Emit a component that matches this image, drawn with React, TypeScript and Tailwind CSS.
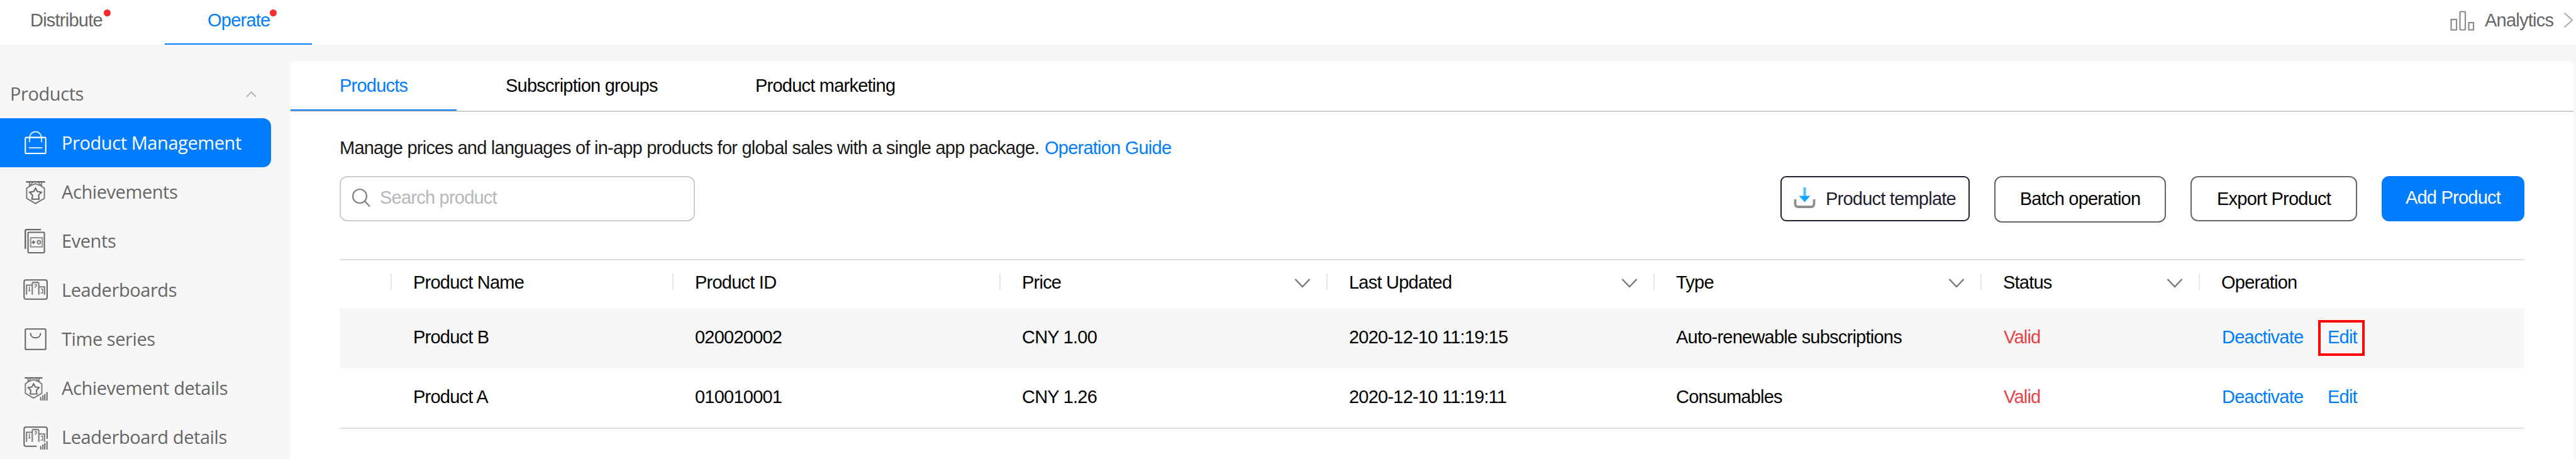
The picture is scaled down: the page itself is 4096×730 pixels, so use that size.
import type { ReactNode } from "react";

const sans = "font-['Liberation_Sans',Arial,sans-serif] text-[29px] leading-[30px] tracking-[-0.77px] whitespace-nowrap";
const side = "font-['Open_Sans','Noto_Sans',sans-serif] text-[29px] leading-[40px] tracking-[-0.42px] whitespace-nowrap";

function Icon({ children }: { children: ReactNode }) {
  return (
    <svg className="h-[39px] w-[39px] shrink-0" viewBox="0 0 18 18" fill="none" stroke="currentColor" strokeWidth="0.95">
      {children}
    </svg>
  );
}

const Bag = () => (
  <Icon>
    <rect x="1.5" y="4.9" width="15" height="11.7" rx="0.7" />
    <path d="M4.6 8.4V5.6C4.6 2.6 6.5.7 9 .7s4.4 1.9 4.4 4.9v2.8" opacity="0.8" />
    <path d="M4 12.5h10" opacity="0.8" />
  </Icon>
);

const medal = (
  <>
    <path d="M2 1.5h14" strokeWidth="1.1" />
    <path d="M4.6 1.8v2.8M13.4 1.8v2.8M5 4.2l2-2.4M13 4.2l-2-2.4" opacity="0.75" />
    <path d="M9 2.9L5.2 4.3 2.5 6.2v7.4L9 17.4l6.500-3.800V6.200l-2.700-1.900z" opacity="0.85" />
    <path d="M9 6.100l1.300 2.500 3 .5-2.100 2.200.4 2.900H6.400l.4-2.900-2.100-2.200 3-.5z" />
  </>
);

const podium = (
  <g opacity="0.85">
    <path d="M2.400 12.300V5.300h4M6.600 12.300V4.200q0-.9.9-.9h3q.9 0 .9.900v8.100M11.600 6.600h4v5.700" />
    <path d="M4.500 6.300v3.200M3.800 9.500h1.500M8.300 5.200q1.500-1 1.500.3l-1.300 1.700M12.900 8.200h1.300v2.900h-1.500" strokeWidth="0.7" />
  </g>
);

const miniBars = <path d="M12.800 15.300V18M14.400 14.200V18M15.800 13.300V18M17.400 11.800V18" strokeWidth="0.900" />;

const Medal = () => <Icon>{medal}</Icon>;

const Events = () => (
  <Icon>
    <path d="M1.500 14.700V1.500q0-1 1-1H13" strokeWidth="1.100" />
    <rect x="3.500" y="2.500" width="12" height="15" rx="0.600" />
    <rect x="5.400" y="6.500" width="8.600" height="6.700" opacity="0.700" />
    <path d="M6.200 9.800h2.600M7.500 8.500v2.600" />
    <circle cx="11.500" cy="9.800" r="1.200" opacity="0.800" />
  </Icon>
);

const Board = () => (
  <Icon>
    <rect x="0.600" y="1.500" width="16.900" height="14.100" rx="1.300" />
    {podium}
  </Icon>
);

const Time = () => (
  <Icon>
    <rect x="1.500" y="1.500" width="15" height="15" rx="0.700" />
    <path d="M5.300 4.500C5.300 6.700 6.900 8 9 8s3.700-1.300 3.700-3.500" />
  </Icon>
);

const MedalDetails = () => (
  <Icon>
    <g transform="translate(-0.800 0) scale(0.930 0.930)">{medal}</g>
    {miniBars}
  </Icon>
);

const BoardDetails = () => (
  <Icon>
    <path d="M9.800 15.600H2q-1.400 0-1.400-1.300V2.800q0-1.300 1.400-1.300h14q1.500 0 1.500 1.300v7.400" />
    {podium}
    {miniBars}
  </Icon>
);

const menu = [
  { label: "Product Management", icon: <Bag />, active: true },
  { label: "Achievements", icon: <Medal /> },
  { label: "Events", icon: <Events /> },
  { label: "Leaderboards", icon: <Board /> },
  { label: "Time series", icon: <Time /> },
  { label: "Achievement details", icon: <MedalDetails /> },
  { label: "Leaderboard details", icon: <BoardDetails /> },
];

const grid = "grid grid-cols-[81px_448px_520px_520px_520px_520px_347px_518px]";

const columns = [
  { label: "Product Name" },
  { label: "Product ID" },
  { label: "Price", sort: true },
  { label: "Last Updated", sort: true },
  { label: "Type", sort: true },
  { label: "Status", sort: true },
  { label: "Operation" },
];

const rows = [
  { cells: ["Product B", "020020002", "CNY 1.00", "2020-12-10 11:19:15", "Auto-renewable subscriptions"], marked: true },
  { cells: ["Product A", "010010001", "CNY 1.26", "2020-12-10 11:19:11", "Consumables"], marked: false },
];

function TopBar() {
  return (
    <header className={`flex h-[71px] bg-white text-[#666] ${sans}`}>
      <div className="flex w-[262px] pt-[17px] pl-[48px]">
        <span className="w-[117px]">Distribute</span>
        <i className="-mt-[2px] h-[11px] w-[11px] rounded-full bg-[#fa2a2d]" />
      </div>
      <div className="flex w-[234px] border-b-2 border-[#007dff] pt-[17px] pl-[68px] text-[#007dff]">
        <span className="w-[99px]">Operate</span>
        <i className="-mt-[2px] h-[11px] w-[11px] rounded-full bg-[#fa2a2d]" />
      </div>
      <div className="ml-auto flex pt-[17px] pr-[4px]">
        <svg className="mr-[15px] h-[33px] w-[41px]" viewBox="0 0 41 33" fill="none" stroke="#8c8c8c" strokeWidth="2.200">
          <rect x="2.500" y="14" width="8.500" height="16.500" />
          <rect x="16.500" y="1.500" width="8.500" height="29" rx="1" />
          <rect x="30.500" y="19" width="7.500" height="11.500" />
        </svg>
        <span className="w-[123px]">Analytics</span>
        <svg className="mt-[2px] ml-[2px] h-[26px] w-[16px]" viewBox="0 0 16 26" fill="none" stroke="#adadad" strokeWidth="2.200">
          <path d="M1.500 1.500L14 13 1.500 24.500" />
        </svg>
      </div>
    </header>
  );
}

function Sidebar() {
  return (
    <aside className={`w-[462px] shrink-0 pt-[58px] text-[#666] ${side}`}>
      <div className="flex h-[59px] items-start justify-between pr-[54px] pl-[16px]">
        <span>Products</span>
        <svg className="mt-[16px] h-[10px] w-[17px]" viewBox="0 0 17 10" fill="none" stroke="#b5b5b5" strokeWidth="2">
          <path d="M1 9l7.500-7.500L16 9" />
        </svg>
      </div>
      {menu.map((m) => (
        <div
          key={m.label}
          className={`flex h-[78px] w-[431px] items-center pl-[37px] ${m.active ? "rounded-r-[13px] bg-[#007dff] text-white" : ""}`}
        >
          {m.icon}
          <span className="ml-[22px]">{m.label}</span>
        </div>
      ))}
    </aside>
  );
}

function Toolbar() {
  return (
    <div className="flex h-[132px] items-start">
      <div className="flex h-[72px] w-[565px] rounded-[12px] border-2 border-[#ccc] pt-[17px] pl-[17px]">
        <svg className="h-[31px] w-[31px]" viewBox="0 0 31 31" fill="none" stroke="#808080" strokeWidth="2.200">
          <circle cx="13" cy="13" r="11" />
          <path d="M20.500 20.500L29 29.500" />
        </svg>
        <span className="ml-[14px] text-[#b5b7bb]">Search product</span>
      </div>
      <div className="ml-auto flex items-start">
        <div className="flex h-[72px] w-[301px] rounded-[9px] border-2 border-[#1f2130] pt-[19px] pl-[19px] text-[#1f2130]">
          <svg className="-mt-[3px] mr-[15px] h-[36px] w-[36px]" viewBox="0 0 36 36" fill="none">
            <path d="M2.500 19v7q0 5 5 5h20q5 0 5-5v-7" stroke="#8f8f8f" strokeWidth="3.800" />
            <path d="M17.500 0v17" stroke="#5cc3ff" strokeWidth="4.400" />
            <path d="M8.500 13.500h18l-9 10z" fill="#14a5ff" />
          </svg>
          Product template
        </div>
        <div className="ml-[39px] flex h-[74px] w-[273px] justify-center rounded-[12px] border-2 border-[#666] pt-[19px] text-black">Batch operation</div>
        <div className="ml-[39px] flex h-[72px] w-[265px] justify-center rounded-[12px] border-2 border-[#666] pt-[19px] text-black">Export Product</div>
        <div className="ml-[39px] flex h-[72px] w-[227px] justify-center rounded-[12px] bg-[#007dff] pt-[19px] text-white">Add Product</div>
      </div>
    </div>
  );
}

function Table() {
  return (
    <div className="border-y-2 border-[#dfdfdf] text-black">
      <div className={`${grid} h-[76px] pt-[20px]`}>
        <span />
        {columns.map((c) => (
          <div key={c.label} className="flex items-start">
            <i className="mt-px mr-[34px] h-[26px] w-[2px] bg-[#e6e8ee]" />
            {c.label}
            {c.sort && (
              <svg className="mt-[8px] mr-[25px] ml-auto h-[17px] w-[26px]" viewBox="0 0 26 17" fill="none" stroke="#777" strokeWidth="2.400">
                <path d="M1.500 2L13 14 24.500 2" />
              </svg>
            )}
          </div>
        ))}
      </div>
      {rows.map((r) => (
        <div key={r.cells[0]} className={`${grid} h-[95px] pt-[31px] ${r.marked ? "bg-[#f7f7f7]" : ""}`}>
          <span />
          {r.cells.map((c) => (
            <span key={c} className="pl-[36px]">{c}</span>
          ))}
          <span className="pl-[37px] text-[#e84045]">Valid</span>
          <div className="flex pl-[37px] text-[#007dff]">
            <span className="w-[168px]">Deactivate</span>
            <span className="relative h-[30px]">
              Edit
              {r.marked && <i className="absolute -top-[12px] -left-[15px] h-[57px] w-[74px] border-4 border-[#ff0000]" />}
            </span>
          </div>
        </div>
      ))}
    </div>
  );
}

export default function App() {
  return (
    <div className="flex h-[730px] w-[4096px] flex-col overflow-hidden bg-[#f7f7f7]">
      <TopBar />
      <div className="flex min-h-0 flex-1">
        <Sidebar />
        <main className={`mt-[26px] w-[3630px] rounded-tl-[4px] rounded-tr-[10px] bg-white ${sans}`}>
          <nav className="flex h-[81px] border-b-2 border-[#ccc] text-black">
            <span className="h-[79px] w-[264px] border-b-2 border-[#007dff] pt-[24px] pl-[78px] text-[#007dff]">Products</span>
            <span className="w-[397px] pt-[24px] pl-[78px]">Subscription groups</span>
            <span className="pt-[24px] pl-[78px]">Product marketing</span>
          </nav>
          <div className="pt-[42px] pr-[78px] pl-[78px]">
            <p className="flex h-[60px] text-[#191919]">
              <span className="w-[1121px]">Manage prices and languages of in-app products for global sales with a single app package.</span>
              <span className="text-[#007dff]">Operation Guide</span>
            </p>
            <Toolbar />
            <Table />
          </div>
        </main>
      </div>
    </div>
  );
}
